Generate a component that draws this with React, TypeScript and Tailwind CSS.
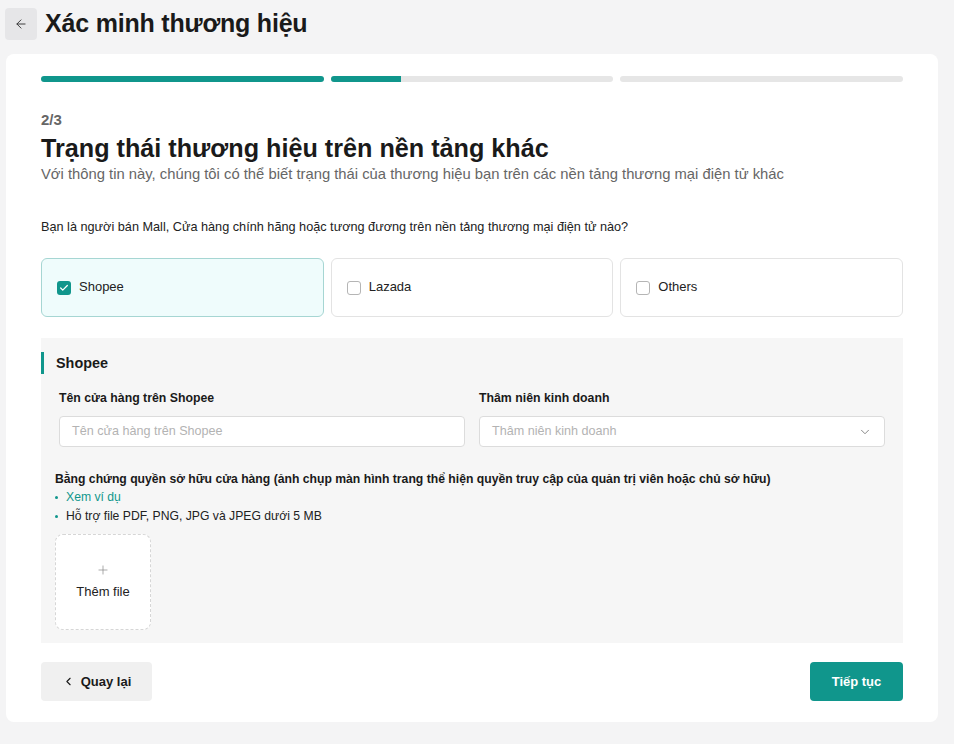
import { ArrowLeft, Check, ChevronDown, ChevronLeft, Plus } from "lucide-react";

const platforms = [
  { name: "Shopee", checked: true },
  { name: "Lazada", checked: false },
  { name: "Others", checked: false },
];

function PlatformOption({ name, checked }: { name: string; checked: boolean }) {
  return (
    <label
      className={
        checked
          ? "flex h-[59px] flex-1 items-center gap-2 rounded-md border border-[#a6d6d3] bg-[#effcfc] px-[15px]"
          : "flex h-[59px] flex-1 items-center gap-2 rounded-md border border-[#e3e3e3] bg-white px-[15px]"
      }
    >
      {checked ? (
        <span className="flex h-[14px] w-[14px] items-center justify-center rounded-[3px] bg-[#10968c]">
          <Check className="h-[10px] w-[10px] text-white" strokeWidth={3} />
        </span>
      ) : (
        <span className="h-[14px] w-[14px] rounded-[3px] border border-[#b5b5b5] bg-white" />
      )}
      <span className="pb-[1px] text-[13px] text-[#222]">{name}</span>
    </label>
  );
}

export default function App() {
  return (
    <div className="min-h-[744px] bg-[#f4f4f5] font-['Liberation_Sans',Arial,sans-serif] text-[#1a1a1a]">
      <header className="flex h-[46px] items-center gap-2 pl-[5px] pt-[1px]">
        <button className="flex h-8 w-8 items-center justify-center rounded bg-[#e6e6e8]">
          <ArrowLeft className="h-[14px] w-[14px] text-[#333]" strokeWidth={1.6} />
        </button>
        <h1 className="text-[25px] font-bold tracking-[-0.2px]">Xác minh thương hiệu</h1>
      </header>

      <main className="mx-[6px] mt-2 w-[932px] rounded-lg bg-white px-[35px] pb-[21px] pt-[22px]">
        {/* step progress */}
        <div className="flex gap-[7px]">
          <div className="h-[6px] flex-1 rounded-full bg-[#10968c]" />
          <div className="h-[6px] flex-1 overflow-hidden rounded-full bg-[#e6e6e6]">
            <div className="h-full w-1/4 bg-[#10968c]" />
          </div>
          <div className="h-[6px] flex-1 rounded-full bg-[#e6e6e6]" />
        </div>

        <p className="mt-[29px] text-[15px] font-bold leading-[18px] text-[#666]">2/3</p>
        <h2 className="mt-[5px] text-[25.2px] font-bold leading-[28px]">
          Trạng thái thương hiệu trên nền tảng khác
        </h2>
        <p className="mt-[3px] text-[14.8px] leading-[18px] text-[#666]">
          Với thông tin này, chúng tôi có thể biết trạng thái của thương hiệu bạn trên các nền tảng thương mại điện tử khác
        </p>

        <p className="mt-[36px] text-[12.7px] leading-4 text-[#222]">
          Bạn là người bán Mall, Cửa hàng chính hãng hoặc tương đương trên nền tảng thương mại điện tử nào?
        </p>

        <div className="mt-[23px] flex gap-[7px]">
          {platforms.map((p) => (
            <PlatformOption key={p.name} name={p.name} checked={p.checked} />
          ))}
        </div>

        {/* Shopee details */}
        <section className="mt-[21px] bg-[#f6f6f6] pb-[13px] pr-[18px] pt-[14px]">
          <div className="flex items-center gap-3">
            <span className="h-[22px] w-[3px] bg-[#10968c]" />
            <h3 className="text-[14.4px] font-bold leading-[22px]">Shopee</h3>
          </div>

          <div className="mt-[16px] grid grid-cols-2 gap-[14px] pl-[18px]">
            <div>
              <p className="text-[12.3px] font-bold leading-4">Tên cửa hàng trên Shopee</p>
              <div className="mt-[10px] flex h-[31px] items-center rounded border border-[#dcdcdc] bg-white px-3 text-[12.6px] text-[#b3b3b3]">
                Tên cửa hàng trên Shopee
              </div>
            </div>
            <div>
              <p className="text-[12.3px] font-bold leading-4">Thâm niên kinh doanh</p>
              <div className="mt-[10px] flex h-[31px] items-center justify-between rounded border border-[#dcdcdc] bg-white px-3 text-[12.6px] text-[#b3b3b3]">
                Thâm niên kinh doanh
                <ChevronDown className="h-[14px] w-[14px] text-[#777]" strokeWidth={1.5} />
              </div>
            </div>
          </div>

          <div className="mt-[24px] pl-[14px]">
            <p className="text-[12.2px] font-bold leading-4">
              Bằng chứng quyền sở hữu cửa hàng (ảnh chụp màn hình trang thể hiện quyền truy cập của quản trị viên hoặc chủ sở hữu)
            </p>
            <ul className="mt-[1px] text-[12.2px] leading-[19px]">
              <li className="flex items-center gap-[8px] text-[#10968c]">
                <span className="h-[3px] w-[3px] rounded-full bg-[#10968c]" />
                Xem ví dụ
              </li>
              <li className="flex items-center gap-[8px] text-[#222]">
                <span className="h-[3px] w-[3px] rounded-full bg-[#10968c]" />
                Hỗ trợ file PDF, PNG, JPG và JPEG dưới 5 MB
              </li>
            </ul>
            <button className="mt-[8px] flex h-[96px] w-[96px] flex-col items-center justify-center rounded-lg border border-dashed border-[#d6d6d6] bg-white">
              <Plus className="h-[14px] w-[14px] text-[#888]" strokeWidth={1.2} />
              <span className="mt-[5px] text-[13px] text-[#222]">Thêm file</span>
            </button>
          </div>
        </section>

        <div className="mt-[19px] flex justify-between">
          <button className="flex h-[39px] w-[111px] items-center justify-center gap-[6px] rounded bg-[#f0f0f0] text-[13px] font-bold">
            <ChevronLeft className="h-[13px] w-[13px]" strokeWidth={2} />
            Quay lại
          </button>
          <button className="flex h-[39px] w-[93px] items-center justify-center rounded bg-[#10968c] text-[13px] font-bold text-white">
            Tiếp tục
          </button>
        </div>
      </main>
    </div>
  );
}
